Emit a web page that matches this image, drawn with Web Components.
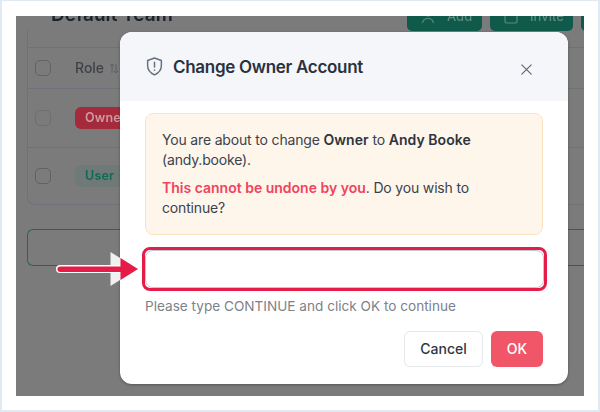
<!DOCTYPE html>
<html lang="en"><head><meta charset="utf-8"><title>Change Owner Account</title>
<style>
html,body{margin:0;padding:0;width:600px;height:412px;overflow:hidden;background:#fff;font-family:Inter,"Liberation Sans",sans-serif}
</style></head><body>
<doc-shot>
  <team-page></team-page>
  <owner-modal slot="modal"></owner-modal>
  <callout-arrow slot="annot"></callout-arrow>
</doc-shot>
<script>
function def(name, html){
  customElements.define(name, class extends HTMLElement{
    constructor(){super();this.attachShadow({mode:'open'}).innerHTML=html;}
  });
}
def('doc-shot',`<style>
:host{display:block;width:600px;height:412px;box-sizing:border-box;border:solid #e1e9f3;border-width:1px 2px 2px 2px;padding:15px 14px 14px;background:#fff}
.stage{position:relative;width:568px;height:380px;background:#7b7b7b;overflow:hidden}
.over{position:absolute;left:104px;top:16px}
</style><div class="stage"><slot></slot><div class="over"><slot name="modal"></slot></div><slot name="annot"></slot></div>`);

def('team-page',`<style>
:host{display:block;height:380px;overflow:hidden;color:#1f2530;filter:blur(.35px)}
.top{display:flex;justify-content:space-between;height:14px;margin-left:35px}
h1{margin:-13px 0 0;font:600 19px/24px Inter,sans-serif;color:#1d222c;white-space:nowrap;align-self:flex-start}
.btns{display:flex;gap:8px;margin-right:-37px;align-self:flex-start;margin-top:-16px}
.btn{height:31px;border-radius:5px;background:#0f5a4a;color:#5f8a7f;font:500 13px/1 Inter,sans-serif;display:flex;align-items:flex-end;gap:12px;box-sizing:border-box;padding:0 14px 8px;overflow:hidden}
.btn svg{flex:none;margin-bottom:-1px}
.card{margin:0 -30px 0 11px;height:157px;border:1px solid #6d7278;border-top:0;border-radius:0 0 0 8px;padding-top:17px}
.row{display:flex;align-items:center;border-top:1px solid #6d7278;box-sizing:border-box;padding-left:7px;gap:24px}
.r1{height:41px}.r2{height:59px}.r3{height:57px}
.cb{width:16px;height:16px;box-sizing:border-box;border:1px solid #5f6266;border-radius:5px;flex:none}
.r2 .cb{border-color:#6c6e72}
.role{font:500 14px/1 Inter,sans-serif;color:#3e4248;display:flex;align-items:center;gap:5px}
.badge{font:600 12.5px/22px Inter,sans-serif;height:22px;border-radius:6px;padding:0 10px;letter-spacing:.2px;box-sizing:border-box;width:70px}
.red{background:#a42a3c;color:#cf9aa2}
.grn{background:#6f7a78;color:#0e6b52}
.wide{margin:24px -30px 0 11px;height:35px;border:1px solid #1f6a55;border-right:0;border-radius:6px 0 0 6px}
</style>
<div class="top"><h1>Default Team</h1>
<div class="btns">
 <div class="btn" style="width:75px"><svg width="14" height="14" viewBox="0 0 14 14" fill="none" stroke="#5f8a7f" stroke-width="1.2"><circle cx="7" cy="3" r="3"/><path d="M1.5 13c.5-3 2.500-4.500 5.500-4.500S12 10 12.500 13"/></svg>Add</div>
 <div class="btn" style="width:83px"><svg width="14" height="14" viewBox="0 0 14 14" fill="none" stroke="#5f8a7f" stroke-width="1.200"><rect x="1" y="0" width="12" height="13" rx="1.500"/></svg>Invite</div>
 <div class="btn" style="width:40px"></div>
</div></div>
<div class="card">
 <div class="row r1"><span class="cb"></span><span class="role">Role <svg width="10" height="11" viewBox="0 0 10 11" fill="none" stroke="#5c6066" stroke-width="1"><path d="M3 10V1M1 3l2-2 2 2M7 1v9M5 8l2 2 2-2"/></svg></span></div>
 <div class="row r2"><span class="cb"></span><span class="badge red">Owner</span></div>
 <div class="row r3"><span class="cb"></span><span class="badge grn">User</span></div>
</div>
<div class="wide"></div>`);

def('owner-modal',`<style>
:host{display:block;width:448px;height:352px;box-sizing:border-box;background:#fff;border-radius:12px;overflow:hidden;box-shadow:0 1px 3px rgba(40,40,40,.45);color:#2f3742;font-family:Inter,sans-serif}
header{height:69px;background:#f4f6fa;display:flex;align-items:center;padding:0 36px 0 26px;gap:10px;box-sizing:border-box}
h2{margin:0;flex:1;font:600 17px/24px Inter,sans-serif;color:#2a3240;letter-spacing:-.3px;position:relative;top:.5px}
.shield{flex:none;width:17px;height:19px}
.x{width:11px;height:11px;flex:none;position:relative;top:3px}
main{padding:12px 25px 0;display:flex;flex-direction:column}
.alert{height:122px;box-sizing:border-box;background:#fef6ea;border:1px solid #fce3c0;border-radius:8px;padding:16px 16px 0;font:400 14px/20px Inter,sans-serif;color:#3b424e;letter-spacing:-.17px}
.alert p{margin:0 0 8px}
b{font-weight:600;color:#2c3440;letter-spacing:.05px}
.warn{color:#f0435f;font-weight:600;letter-spacing:0}
.field{position:relative;margin:15px -1px 0 0;height:38px}
input{display:block;width:100%;height:38px;box-sizing:border-box;border:1px solid #bfc8d4;border-radius:8px;background:#fff;outline:0;padding:0 10px;font:14px Inter,sans-serif}
.ring{position:absolute;inset:-3px;border:3px solid #e41c47;border-radius:8px;pointer-events:none}
.hint{margin-top:9px;font:400 13.6px/18px Inter,sans-serif;color:#7d8288;white-space:nowrap}
footer{display:flex;justify-content:flex-end;gap:8px;margin-top:16px}
button{height:36px;border-radius:6px;font:450 14px/1 Inter,sans-serif;box-sizing:border-box;padding:0;cursor:pointer}
.c{width:79px;background:#fff;border:1px solid #e5e7eb;color:#2f3742}
.o{width:52px;background:#f05668;border:0;color:#fff}
</style>
<header>
 <svg class="shield" viewBox="0 0 16 18" fill="none" stroke="#6a717c" stroke-width="1.400" stroke-linejoin="round" stroke-linecap="round"><path d="M8 1l6.500 2.300v5c0 4-2.700 6.900-6.500 8.700-3.800-1.800-6.500-4.700-6.500-8.700v-5z"/><path d="M8 5v4.500M8 12.300v.2"/></svg>
 <h2>Change Owner Account</h2>
 <svg class="x" viewBox="0 0 11 11" fill="none" stroke="#5b626d" stroke-width="1.100" stroke-linecap="round"><path d="M.8.8l9.400 9.400M10.200.8L.8 10.200"/></svg>
</header>
<main>
 <div class="alert">
  <p>You are about to change <b>Owner</b> to <b>Andy Booke</b><br>(andy.booke).</p>
  <p><span class="warn">This cannot be undone by you</span>. Do you wish to<br>continue?</p>
 </div>
 <div class="field"><input type="text" aria-label="Confirmation"><span class="ring"></span></div>
 <div class="hint">Please type CONTINUE and click OK to continue</div>
 <footer><button class="c">Cancel</button><button class="o">OK</button></footer>
</main>`);

def('callout-arrow',`<style>
:host{display:block;position:absolute;left:38px;top:234px;width:90px;height:40px}
svg{display:block}
</style>
<svg width="90" height="40" viewBox="0 0 90 40">
 <path d="M56.500 2v34l27-17z" fill="#f0f0f0"/>
 <rect x="2" y="15" width="66" height="8" rx="4" fill="#fff"/>
 <rect x="3.500" y="16.500" width="66" height="5.500" rx="2.700" fill="#e41c47"/>
 <path d="M66.500 8v22l17.500-11z" fill="#e41c47"/>
</svg>`);
</script>
</body></html>
